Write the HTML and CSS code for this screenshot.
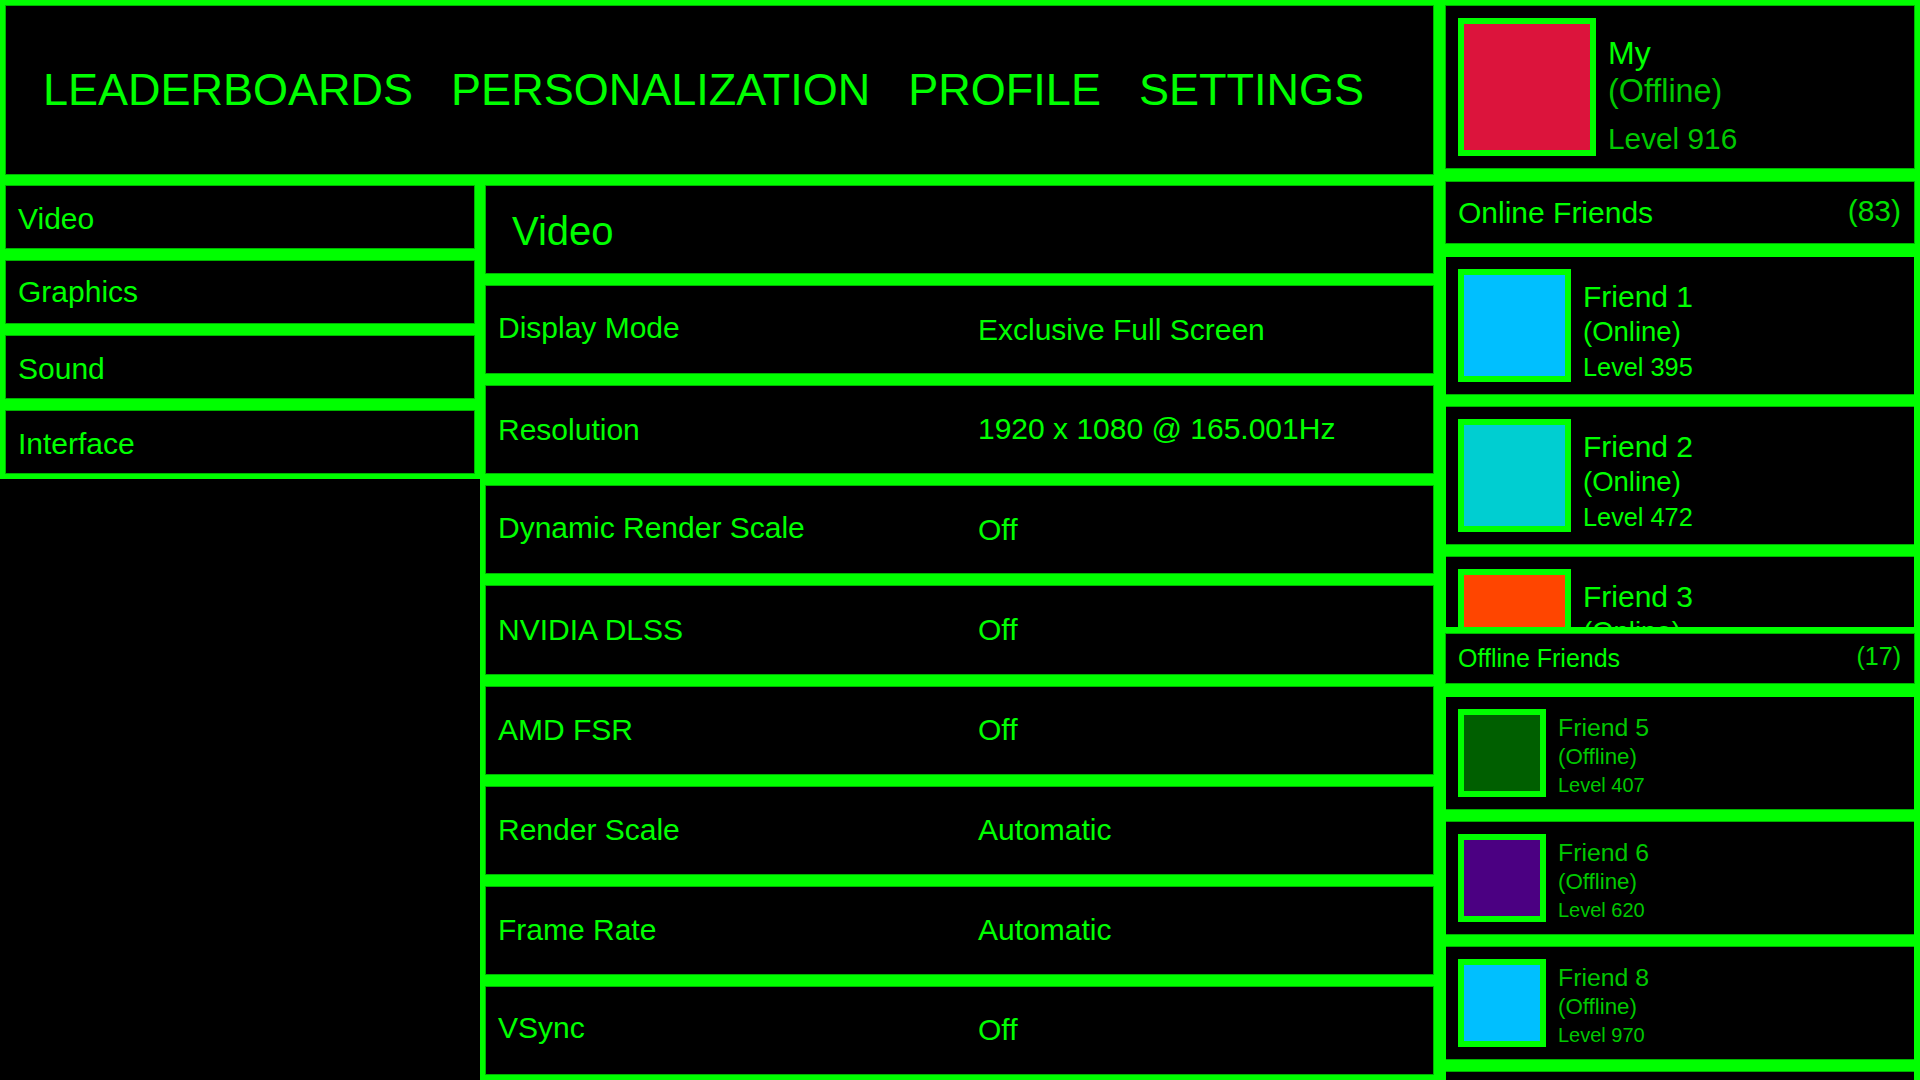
FILE: index.html
```html
<!DOCTYPE html>
<html lang="en">
<head>
<meta charset="utf-8">
<title>Settings - Video</title>
<link rel="stylesheet" href="styles.css">
</head>
<body>
<div class="app">
  <div class="main">
    <header class="header">
      <nav class="topnav">
        <span class="topnav-item">LEADERBOARDS</span>
        <span class="topnav-item">PERSONALIZATION</span>
        <span class="topnav-item">PROFILE</span>
        <span class="topnav-item">SETTINGS</span>
      </nav>
    </header>
    <div class="lower">
      <aside class="sidenav">
        <div class="sidenav-item"><span>Video</span></div>
        <div class="sidenav-item"><span class="desc">Graphics</span></div>
        <div class="sidenav-item"><span>Sound</span></div>
        <div class="sidenav-item"><span>Interface</span></div>
      </aside>
      <section class="content">
        <div class="content-title"><span class="content-title-text">Video</span></div>
        <div class="setting"><span class="setting-label desc">Display Mode</span><span class="setting-value">Exclusive Full Screen</span></div>
        <div class="setting"><span class="setting-label">Resolution</span><span class="setting-value desc-sm">1920 x 1080 @ 165.001Hz</span></div>
        <div class="setting"><span class="setting-label desc">Dynamic Render Scale</span><span class="setting-value">Off</span></div>
        <div class="setting"><span class="setting-label">NVIDIA DLSS</span><span class="setting-value">Off</span></div>
        <div class="setting"><span class="setting-label">AMD FSR</span><span class="setting-value">Off</span></div>
        <div class="setting"><span class="setting-label">Render Scale</span><span class="setting-value">Automatic</span></div>
        <div class="setting"><span class="setting-label">Frame Rate</span><span class="setting-value">Automatic</span></div>
        <div class="setting"><span class="setting-label desc">VSync</span><span class="setting-value">Off</span></div>
      </section>
    </div>
  </div>

  <aside class="side">
    <div class="profile">
      <div class="avatar avatar-lg crimson"></div>
      <div class="who who-lg">
        <div class="who-name">My</div>
        <div class="who-status dim">(Offline)</div>
        <div class="who-level dim">Level 916</div>
      </div>
    </div>

    <div class="list-head online-head">
      <span>Online Friends</span><span class="count">(83)</span>
    </div>
    <div class="friends online-list">
      <div class="friend friend-on">
        <div class="avatar avatar-md skyblue"></div>
        <div class="who who-md">
          <div class="who-name">Friend 1</div>
          <div class="who-status">(Online)</div>
          <div class="who-level">Level 395</div>
        </div>
      </div>
      <div class="friend friend-on">
        <div class="avatar avatar-md turquoise"></div>
        <div class="who who-md">
          <div class="who-name">Friend 2</div>
          <div class="who-status">(Online)</div>
          <div class="who-level">Level 472</div>
        </div>
      </div>
      <div class="friend friend-on">
        <div class="avatar avatar-md orangered"></div>
        <div class="who who-md">
          <div class="who-name">Friend 3</div>
          <div class="who-status">(Online)</div>
          <div class="who-level">Level 238</div>
        </div>
      </div>
    </div>

    <div class="list-head offline-head">
      <span>Offline Friends</span><span class="count">(17)</span>
    </div>
    <div class="friends offline-list">
      <div class="friend friend-off">
        <div class="avatar avatar-sm darkgreen"></div>
        <div class="who who-sm dim">
          <div class="who-name">Friend 5</div>
          <div class="who-status">(Offline)</div>
          <div class="who-level">Level 407</div>
        </div>
      </div>
      <div class="friend friend-off">
        <div class="avatar avatar-sm indigo"></div>
        <div class="who who-sm dim">
          <div class="who-name">Friend 6</div>
          <div class="who-status">(Offline)</div>
          <div class="who-level">Level 620</div>
        </div>
      </div>
      <div class="friend friend-off">
        <div class="avatar avatar-sm skyblue"></div>
        <div class="who who-sm dim">
          <div class="who-name">Friend 8</div>
          <div class="who-status">(Offline)</div>
          <div class="who-level">Level 970</div>
        </div>
      </div>
      <div class="friend friend-off">
        <div class="avatar avatar-sm indigo"></div>
        <div class="who who-sm dim">
          <div class="who-name">Friend 9</div>
          <div class="who-status">(Offline)</div>
          <div class="who-level">Level 154</div>
        </div>
      </div>
    </div>
  </aside>
</div>
</body>
</html>
```

FILE: styles.css
```css
* { box-sizing: border-box; }

html, body {
  margin: 0;
  padding: 0;
  background: #000;
}

body {
  width: 1920px;
  height: 1080px;
  overflow: hidden;
  font-family: "Liberation Sans", Arial, sans-serif;
  color: #00ff00;
}

.app {
  display: flex;
  width: 1920px;
  height: 1080px;
}

/* ---------- left / main part ---------- */
.main {
  width: 1440px;
  display: flex;
  flex-direction: column;
}

.header {
  background: #00ff00;
  padding: 6px 7px 6px 6px;
  height: 180px;
}

.topnav {
  height: 168px;
  background: #000;
  box-shadow: 0 0 0 1px #00b400;
  display: flex;
  align-items: center;
  gap: 38px;
  padding-left: 37px;
  font-size: 45px;
}

.lower {
  display: flex;
  height: 900px;
}

.sidenav {
  width: 480px;
  align-self: flex-start;
  background: #00ff00;
  padding: 6px;
  display: flex;
  flex-direction: column;
  gap: 13px;
}

.sidenav-item {
  height: 62px;
  background: #000;
  box-shadow: 0 0 0 1px #00b400;
  display: flex;
  align-items: center;
  padding-left: 12px;
  padding-top: 3px;
  font-size: 30px;
}

.desc {
  position: relative;
  top: -2px;
}
.desc-sm {
  position: relative;
  top: -1px;
}

.content {
  width: 960px;
  background: #00ff00;
  padding: 6px 7px 6px 6px;
  display: flex;
  flex-direction: column;
  gap: 13px;
}

.content-title,
.setting {
  flex: 1 1 0;
  min-height: 0;
  background: #000;
  box-shadow: 0 0 0 1px #00b400;
  display: flex;
  align-items: center;
}

.content-title {
  font-size: 40px;
  padding-left: 26px;
}

.content-title-text {
  position: relative;
  top: 2px;
}

.setting {
  padding-left: 12px;
  font-size: 30px;
}

.setting-label {
  width: 480px;
  flex: none;
}

.setting-value {
  flex: 1;
}

/* ---------- right side ---------- */
.side {
  width: 480px;
  height: 1080px;
  overflow: hidden;
  background: #00ff00;
  padding: 6px;
  display: flex;
  flex-direction: column;
}

.profile {
  flex: none;
  height: 162px;
  background: #000;
  box-shadow: 0 0 0 1px #00b400;
  padding: 12px;
  display: flex;
  align-items: flex-end;
}

.avatar {
  flex: none;
  border: 6px solid #00ff00;
}
.avatar-lg { width: 138px; height: 138px; }
.avatar-md { width: 113px; height: 113px; }
.avatar-sm { width: 88px; height: 88px; }

.crimson { background: #dc143c; }
.skyblue { background: #00bfff; }
.turquoise { background: #00ced1; }
.orangered { background: #ff4500; }
.darkgreen { background: #005f00; }
.indigo { background: #4b0082; }

.who {
  display: flex;
  flex-direction: column;
  line-height: 1.15;
  white-space: nowrap;
}
.dim { color: #00c800; }

.who-lg { margin-left: 12px; }
.who-lg .who-name { font-size: 32px; }
.who-lg .who-status { font-size: 32.3px; margin-top: 1px; }
.who-lg .who-level { font-size: 29.8px; margin-top: 12px; }

.who-md { margin-left: 12px; }
.who-md .who-name { font-size: 30px; }
.who-md .who-status { font-size: 27.5px; margin-top: 2px; }
.who-md .who-level { font-size: 25.3px; margin-top: 5px; }

.who-sm { margin-left: 12px; }
.who-sm .who-name { font-size: 24.8px; }
.who-sm .who-status { font-size: 22.3px; margin-top: 2px; }
.who-sm .who-level { font-size: 20px; margin-top: 4px; }

.list-head {
  flex: none;
  background: #000;
  box-shadow: 0 0 0 1px #00b400;
  display: flex;
  align-items: center;
  justify-content: space-between;
  padding: 0 13px 0 12px;
}
.list-head .count {
  color: #00e000;
  position: relative;
  top: -2px;
}

.online-head {
  margin-top: 14px;
  height: 61px;
  font-size: 30px;
}

.offline-head {
  margin-top: 7px;
  height: 49px;
  font-size: 25px;
}

.friends {
  flex: none;
  display: flex;
  flex-direction: column;
  gap: 13px;
  overflow: hidden;
}

.online-list {
  margin-top: 14px;
  height: 370px;
}

.offline-list {
  margin-top: 14px;
}

.friend {
  flex: none;
  background: #000;
  box-shadow: 0 0 0 1px #00b400;
  padding: 12px;
  display: flex;
  align-items: flex-end;
}
.friend-on { height: 137px; }
.friend-off { height: 112px; }
```
